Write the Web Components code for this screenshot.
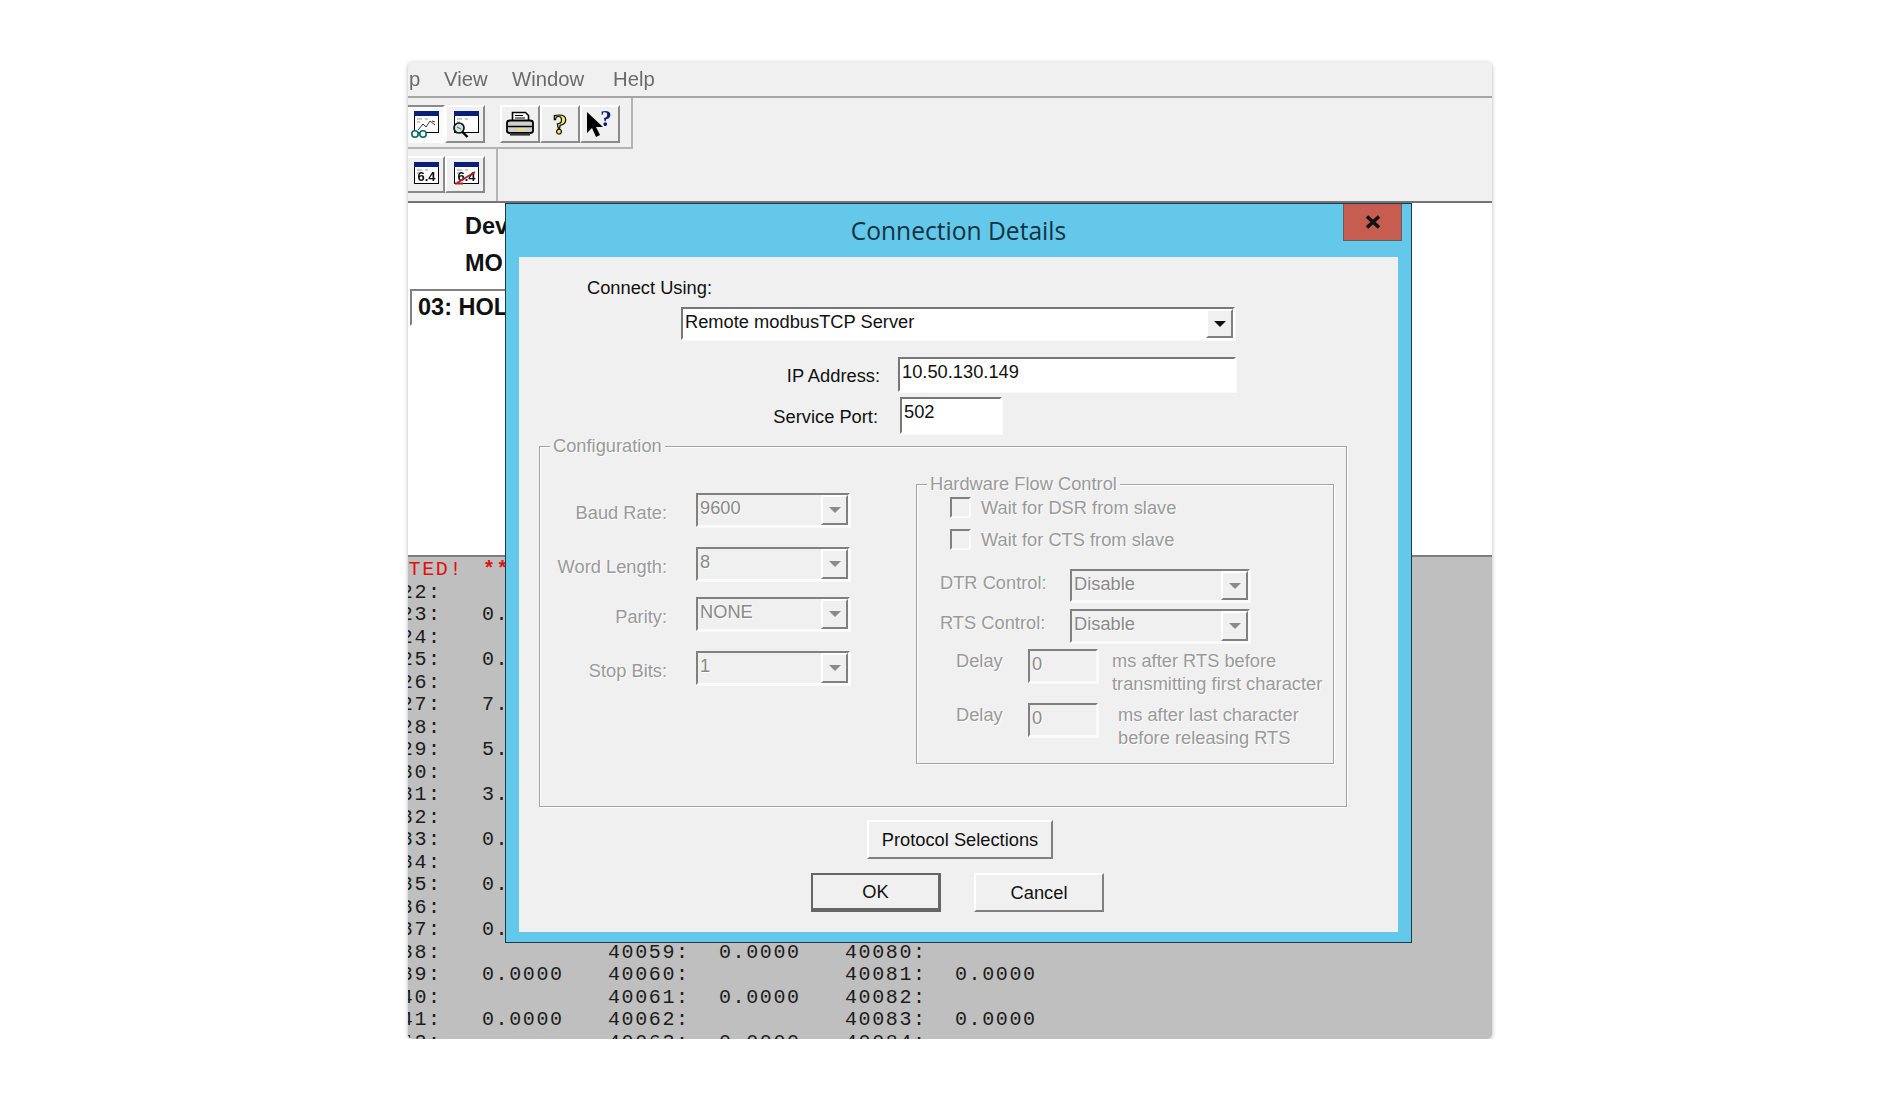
<!DOCTYPE html>
<html>
<head>
<meta charset="utf-8">
<title>Connection Details</title>
<style>
  html, body { margin: 0; background: #fff; }
  body { font: 18.3px "Liberation Sans", Arial, sans-serif; color: #111; }
</style>
</head>
<body>
<mb-window>
  <mb-menu slot="menu"></mb-menu>
  <mb-toolbars slot="tools"></mb-toolbars>
  <mb-info slot="info"></mb-info>
  <mb-registers slot="registers"></mb-registers>
  <mb-dialog slot="dialog" heading="Connection Details">
    <mb-connection></mb-connection>
  </mb-dialog>
</mb-window>

<script>
// base class, every element just returns its html and its css
class MbBase extends HTMLElement {
  constructor() {
    super();
    this.attachShadow({ mode: 'open' });
  }
  getStyles() { return ''; }
  getTemplate() { return '<slot></slot>'; }
  connectedCallback() {
    this.shadowRoot.innerHTML = `<style>${this.getStyles()}</style>${this.getTemplate()}`;
  }
}

class MbWindow extends MbBase {
  getStyles() {
    return `
      :host { display: block; position: relative; width: 1084px; height: 977px; margin: 62px auto 0; filter: blur(.45px); }
      .frame { height: 100%; display: flex; flex-direction: column; overflow: hidden; border-radius: 5px;
        box-shadow: 0 1px 4px rgba(0,0,0,.3); background: #f0f0f0; }
      .dlg { position: absolute; left: 97px; top: 141px; }
    `;
  }
  getTemplate() {
    return `
      <div class="frame">
        <slot name="menu"></slot>
        <slot name="tools"></slot>
        <slot name="info"></slot>
        <slot name="registers"></slot>
      </div>
      <div class="dlg"><slot name="dialog"></slot></div>
    `;
  }
}

class MbMenu extends MbBase {
  getStyles() {
    return `
      :host { display: flex; height: 34px; border-bottom: 2px solid #a6a6a6; flex: none; box-sizing: content-box;
        align-items: center; font-size: 20.3px; color: #6a6a6a; overflow: hidden; }
      span { display: block; }
      .p { margin-left: 1px; width: 35px; }
      .v { width: 68px; }
      .w { width: 101px; }
    `;
  }
  getTemplate() {
    return `<span class="p">p</span><span class="v">View</span><span class="w">Window</span><span>Help</span>`;
  }
}

class MbToolBtn extends MbBase {
  getStyles() {
    return `
      :host { display: flex; align-items: center; justify-content: center; width: 40px; height: 38px; box-sizing: border-box;
        border: 2px solid; border-color: #fff #8a8a8a #8a8a8a #fff; background: #f0f0f0; flex: none; }
      :host([pressed]) { border-color: #8a8a8a #fff #fff #8a8a8a; background: #fafafa; }
      ::slotted(svg) { display: block; }
    `;
  }
}

class MbToolbars extends MbBase {
  getStyles() {
    return `
      :host { display: block; flex: none; height: 103px; border-bottom: 2px solid #757575; }
      .one { display: flex; width: 222px; height: 51px; box-sizing: border-box; padding-top: 7px;
        border-right: 2px solid #b4b4b4; border-bottom: 2px solid #b4b4b4; width: 225px; }
      .two { display: flex; width: 90px; height: 52px; box-sizing: border-box; padding-top: 7px; border-right: 2px solid #b4b4b4; }
      .inner { display: flex; margin-left: -3px; }
      .gap { width: 15px; }
      svg text { font-family: "Liberation Sans", Arial, sans-serif; }
    `;
  }
  getTemplate() {
    const win = (inner) => `
      <svg width="34" height="32" viewBox="0 0 34 32">
        <rect x="6.5" y="3.5" width="24" height="21" fill="#fff" stroke="#000"/>
        <rect x="6" y="3" width="25" height="5" fill="#0a1f78"/>
        <path d="M9 11h5M9 14h3M17 11h3" stroke="#999" fill="none"/>
        ${inner}
      </svg>`;
    const chart = `
      <path d="M10 22l5-6 3 3 4-6 5 4M24 13l3 1" stroke="#333" stroke-width="1" fill="none"/>
      <circle cx="7" cy="26" r="3.2" fill="#fff" stroke="#0b6a6a" stroke-width="1.6"/>
      <circle cx="15" cy="26" r="3.2" fill="#fff" stroke="#0b6a6a" stroke-width="1.6"/>
      <path d="M10 25h2" stroke="#0b6a6a" stroke-width="1.5"/>`;
    const glass = `
      <circle cx="11" cy="20" r="5" fill="#cfe3e3" stroke="#111" stroke-width="1.7"/>
      <path d="M9 19l4 2" stroke="#555"/>
      <path d="M14.5 24l5 5" stroke="#000" stroke-width="2.4"/>`;
    const numbers = `<text x="18.5" y="22" text-anchor="middle" font-size="13" font-weight="700" fill="#111">6.4</text>`;
    const slash = `${numbers}<path d="M9 24l18-11" stroke="#b0212a" stroke-width="2" fill="none"/><path d="M7 24.5h8" stroke="#b0212a" stroke-width="2"/>`;
    return `
      <div class="one"><div class="inner">
        <mb-tool-btn pressed>${win(chart)}</mb-tool-btn>
        <mb-tool-btn>${win(glass)}</mb-tool-btn>
        <div class="gap"></div>
        <mb-tool-btn>
          <svg width="32" height="30" viewBox="0 0 32 30">
            <path d="M8.5 12V3.5h13l3 3V12" fill="#fff" stroke="#000" stroke-width="1.6"/>
            <path d="M11 6.5h8M11 9h10" stroke="#000"/>
            <path d="M3 14q0-2.5 3-2.5h20q3 0 3 2.5v8q0 2-3 2H6q-3 0-3-2z" fill="#d0d0d0" stroke="#000" stroke-width="1.8"/>
            <path d="M3.5 17.5h25" stroke="#000" stroke-width="1.4"/>
            <rect x="13" y="19" width="8" height="2.4" fill="#e3df7d"/>
            <rect x="6" y="24" width="20" height="2.6" fill="#333"/>
          </svg>
        </mb-tool-btn>
        <mb-tool-btn>
          <svg width="24" height="30" viewBox="0 0 24 30">
            <text x="12" y="25" text-anchor="middle" font-size="30" font-weight="700"
              style="font-family:'Liberation Serif',serif" fill="#eeea5a" stroke="#000" stroke-width="1.2">?</text>
          </svg>
        </mb-tool-btn>
        <mb-tool-btn>
          <svg width="34" height="30" viewBox="0 0 34 30">
            <path d="M4 3v21l5-5 4 9 4-2-4-8h7z" fill="#000"/>
            <text x="23" y="17" text-anchor="middle" font-size="23" font-weight="700"
              style="font-family:'Liberation Serif',serif" fill="#0a1f78">?</text>
          </svg>
        </mb-tool-btn>
      </div></div>
      <div class="two"><div class="inner">
        <mb-tool-btn style="height:37px">${win(numbers)}</mb-tool-btn>
        <mb-tool-btn style="height:37px">${win(slash)}</mb-tool-btn>
      </div></div>
    `;
  }
}

class MbInfo extends MbBase {
  getStyles() {
    return `
      :host { display: block; flex: none; height: 354px; box-sizing: border-box; background: #fff; border-bottom: 2px solid #7d7d7d;
        font-weight: 700; font-size: 23.5px; color: #111; padding-top: 7px; }
      .t { height: 37px; line-height: 32px; margin-left: 57px; }
      .b { width: 97px; height: 37px; box-sizing: border-box; margin: 5px 0 0 2px; padding-left: 6px; line-height: 32px;
        border: 2px solid; border-color: #808080 #fff #fff #808080; overflow: hidden; white-space: nowrap; }
    `;
  }
  getTemplate() {
    return `<div class="t">Dev</div><div class="t">MO</div><div class="b">03: HOL</div>`;
  }
}

class MbRegisters extends MbBase {
  getStyles() {
    return `
      :host { display: block; flex: 1; min-height: 0; overflow: hidden; background: #bfbfbf; color: #1c1c1c; padding-top: 2px;
        font: 20px/22.5px "Liberation Mono", "Courier New", monospace; letter-spacing: 1.6px; white-space: pre; }
      .red { color: #e01010; display: flex; margin-left: -13px; height: 22.5px; }
      .red b { margin-left: 20px; }
      .row { display: grid; grid-template-columns: 122px 126px 111px 126px 110px auto; margin-left: -48px; height: 22.5px; }
    `;
  }
  getTemplate() {
    const left = { 23: '0.', 25: '0.', 27: '7.', 29: '5.', 31: '3.', 33: '0.', 35: '0.', 37: '0.' };
    let rows = '';
    for (let n = 22; n <= 37; n++) {
      rows += `<div class="row"><span>400${n}:</span><span>${left[n] || ''}</span></div>`;
    }
    const tail = [
      ['40038:', '', '40059:', '0.0000', '40080:', ''],
      ['40039:', '0.0000', '40060:', '', '40081:', '0.0000'],
      ['40040:', '', '40061:', '0.0000', '40082:', ''],
      ['40041:', '0.0000', '40062:', '', '40083:', '0.0000'],
      ['40042:', '', '40063:', '0.0000', '40084:', '']
    ];
    tail.forEach((r) => {
      rows += `<div class="row">${r.map((c) => `<span>${c}</span>`).join('')}</div>`;
    });
    return `<div class="red"><span>CTED!</span><b>**</b></div>${rows}`;
  }
}

class MbDialog extends MbBase {
  static get observedAttributes() { return ['heading']; }
  attributeChangedCallback(attr, oldVal, newVal) {
    if (oldVal !== newVal) this[attr] = newVal;
  }
  getStyles() {
    return `
      :host { display: block; width: 907px; height: 740px; box-sizing: border-box; background: #63c8ea;
        border: 1px solid #1d3a48; border-top-width: 1px; padding: 0 13px 11px; }
      .bar { position: relative; height: 53px; display: flex; align-items: center; justify-content: center;
        font: 24.6px "Open Sans", "Noto Sans", sans-serif; color: #12333f; }
      .close { position: absolute; top: 0; right: -4px; width: 59px; height: 37px; box-sizing: border-box; background: #c75c50;
        border: 1px solid #5f5f5f; border-top: 0; display: flex; align-items: center; justify-content: center; }
      .panel { height: 675px; background: #f0f0f0; box-sizing: border-box; }
    `;
  }
  getTemplate() {
    return `
      <div class="bar">${this.heading}
        <div class="close">
          <svg width="16" height="14" viewBox="0 0 16 14"><path d="M2 1.5l12 11M14 1.5l-12 11" stroke="#111" stroke-width="3.6" fill="none"/></svg>
        </div>
      </div>
      <div class="panel"><slot></slot></div>
    `;
  }
}

class MbInput extends MbBase {
  getStyles() {
    return `
      :host { display: block; box-sizing: border-box; border: 2.5px solid; border-color: #777 #fff #fff #777; background: #fff;
        padding-left: 2px; line-height: 26px; box-shadow: 1px 1px 0 #fafafa; color: #111; }
      :host([disabled]) { background: #f0f0f0; color: #8a8a8a; border-color: #808080 #fbfbfb #fbfbfb #808080; }
    `;
  }
}

class MbCombo extends MbInput {
  getStyles() {
    return super.getStyles() + `
      :host { display: flex; justify-content: space-between; }
      .arrow { width: 27px; height: 100%; box-sizing: border-box; flex: none; display: flex; align-items: center; justify-content: center;
        border: 2px solid; border-color: #fff #808080 #808080 #fff; background: #f0f0f0; }
      .arrow i { width: 0; height: 0; border: 6px solid transparent; border-top: 6px solid #111; border-bottom: 0; }
      :host([disabled]) .arrow i { border-top-color: #8a8a8a; }
      :host { padding-right: 0; }
    `;
  }
  getTemplate() {
    return `<span><slot></slot></span><div class="arrow"><i></i></div>`;
  }
}

class MbGroup extends MbBase {
  static get observedAttributes() { return ['legend']; }
  attributeChangedCallback(attr, oldVal, newVal) {
    if (oldVal !== newVal) this[attr] = newVal;
  }
  getStyles() {
    return `
      :host { display: block; box-sizing: border-box; border: 1.5px solid #a3a3a3; box-shadow: 1px 1px 0 #fff, inset 1px 1px 0 #fff; color: #9a9a9a; }
      .legend { width: fit-content; margin: -13px 0 0 10px; padding: 0 3px; height: 24px; line-height: 24px; background: #f0f0f0; text-shadow: 1px 1px 0 #fff; }
    `;
  }
  getTemplate() {
    return `<div class="legend">${this.legend}</div><slot></slot>`;
  }
}

class MbCheck extends MbBase {
  getStyles() {
    return `
      :host { display: flex; align-items: center; gap: 10px; height: 21px; color: #9a9a9a; text-shadow: 1px 1px 0 #fff; }
      i { display: block; width: 21px; height: 21px; box-sizing: border-box; border: 2px solid; border-color: #808080 #fbfbfb #fbfbfb #808080; background: #f0f0f0; }
    `;
  }
  getTemplate() {
    return `<i></i><span><slot></slot></span>`;
  }
}

class MbButton extends MbBase {
  getStyles() {
    return `
      :host { display: flex; align-items: center; justify-content: center; box-sizing: border-box; height: 39px; background: #f0f0f0;
        border: 2px solid; border-color: #fff #808080 #808080 #fff; color: #111; }
      :host([default]) { border-color: #666; border-width: 2px 3px 4px 2px; }
    `;
  }
}

class MbConnection extends MbBase {
  getStyles() {
    return `
      :host { display: block; padding-top: 19px; }
      .using { margin-left: 68px; height: 24px; line-height: 24px; }
      .main { margin: 7px 0 0 162px; width: 554px; height: 33px; }
      .field { display: grid; grid-template-columns: 361px auto; column-gap: 18px; align-items: center; justify-items: start; }
      .field span { justify-self: end; padding-top: 3px; }
      .ip { margin-top: 17px; }
      .port { margin-top: 5px; }
      .port span { margin-right: 2px; }
      .ipbox { width: 338px; height: 35px; }
      .portbox { width: 102px; height: 37px; margin-left: 2px; }
      .config { margin: 12px 0 0 20px; width: 808px; height: 361px; }
      .cols { display: flex; margin-top: 26px; }
      .left { width: 376px; flex: none; padding-top: 9px; box-sizing: border-box; display: flex; flex-direction: column; }
      .lrow { display: grid; grid-template-columns: 127px 154px; column-gap: 29px; height: 34px; color: #9a9a9a; text-shadow: 1px 1px 0 #fff; }
      .lrow span { justify-self: end; line-height: 40px; }
      .lrow mb-combo { height: 34px; }
      .hw { width: 418px; height: 280px; }
      .checks { display: flex; flex-direction: column; gap: 11px; margin: 1px 0 0 33px; }
      .ctl { display: grid; grid-template-columns: 130px 180px; margin-left: 23px; color: #9a9a9a; text-shadow: 1px 1px 0 #fff; line-height: 28px; }
      .ctl mb-combo { height: 33px; }
      .d { display: grid; grid-template-columns: 72px 70px auto; margin-left: 39px; color: #9a9a9a; text-shadow: 1px 1px 0 #fff; line-height: 23px; }
      .d mb-input { height: 34px; }
      .d span:first-child { padding-top: 0; }
      .d p { margin: 0 0 0 14px; }
      .buttons { display: flex; flex-direction: column; }
      .proto { width: 186px; margin: 13px 0 0 348px; }
      .okrow { display: flex; gap: 33px; margin: 14px 0 0 292px; }
      .okrow mb-button { width: 130px; }
    `;
  }
  getTemplate() {
    const dis = (items) => items.map(([label, val, gap]) =>
      `<div class="lrow" style="margin-top:${gap}px"><span>${label}</span><mb-combo disabled>${val}</mb-combo></div>`).join('');
    return `
      <div class="using">Connect Using:</div>
      <mb-combo class="main">Remote modbusTCP Server</mb-combo>
      <div class="field ip"><span>IP Address:</span><mb-input class="ipbox">10.50.130.149</mb-input></div>
      <div class="field port"><span>Service Port:</span><mb-input class="portbox">502</mb-input></div>
      <mb-group class="config" legend="Configuration">
        <div class="cols">
          <div class="left">
            ${dis([['Baud Rate:', '9600', 0], ['Word Length:', '8', 20], ['Parity:', 'NONE', 16], ['Stop Bits:', '1', 20]])}
          </div>
          <mb-group class="hw" legend="Hardware Flow Control">
            <div class="checks">
              <mb-check>Wait for DSR from slave</mb-check>
              <mb-check>Wait for CTS from slave</mb-check>
            </div>
            <div class="ctl" style="margin-top:19px"><span>DTR Control:</span><mb-combo disabled>Disable</mb-combo></div>
            <div class="ctl" style="margin-top:7px"><span>RTS Control:</span><mb-combo disabled style="height:34px">Disable</mb-combo></div>
            <div class="d" style="margin-top:6px"><span>Delay</span><mb-input disabled>0</mb-input>
              <p>ms after RTS before<br>transmitting first character</p></div>
            <div class="d" style="margin-top:8px"><span>Delay</span><mb-input disabled>0</mb-input>
              <p style="margin-left:20px">ms after last character<br>before releasing RTS</p></div>
          </mb-group>
        </div>
      </mb-group>
      <div class="buttons">
        <mb-button class="proto">Protocol Selections</mb-button>
        <div class="okrow"><mb-button default>OK</mb-button><mb-button>Cancel</mb-button></div>
      </div>
    `;
  }
}

customElements.define('mb-window', MbWindow);
customElements.define('mb-menu', MbMenu);
customElements.define('mb-tool-btn', MbToolBtn);
customElements.define('mb-toolbars', MbToolbars);
customElements.define('mb-info', MbInfo);
customElements.define('mb-registers', MbRegisters);
customElements.define('mb-dialog', MbDialog);
customElements.define('mb-input', MbInput);
customElements.define('mb-combo', MbCombo);
customElements.define('mb-group', MbGroup);
customElements.define('mb-check', MbCheck);
customElements.define('mb-button', MbButton);
customElements.define('mb-connection', MbConnection);
</script>
</body>
</html>
